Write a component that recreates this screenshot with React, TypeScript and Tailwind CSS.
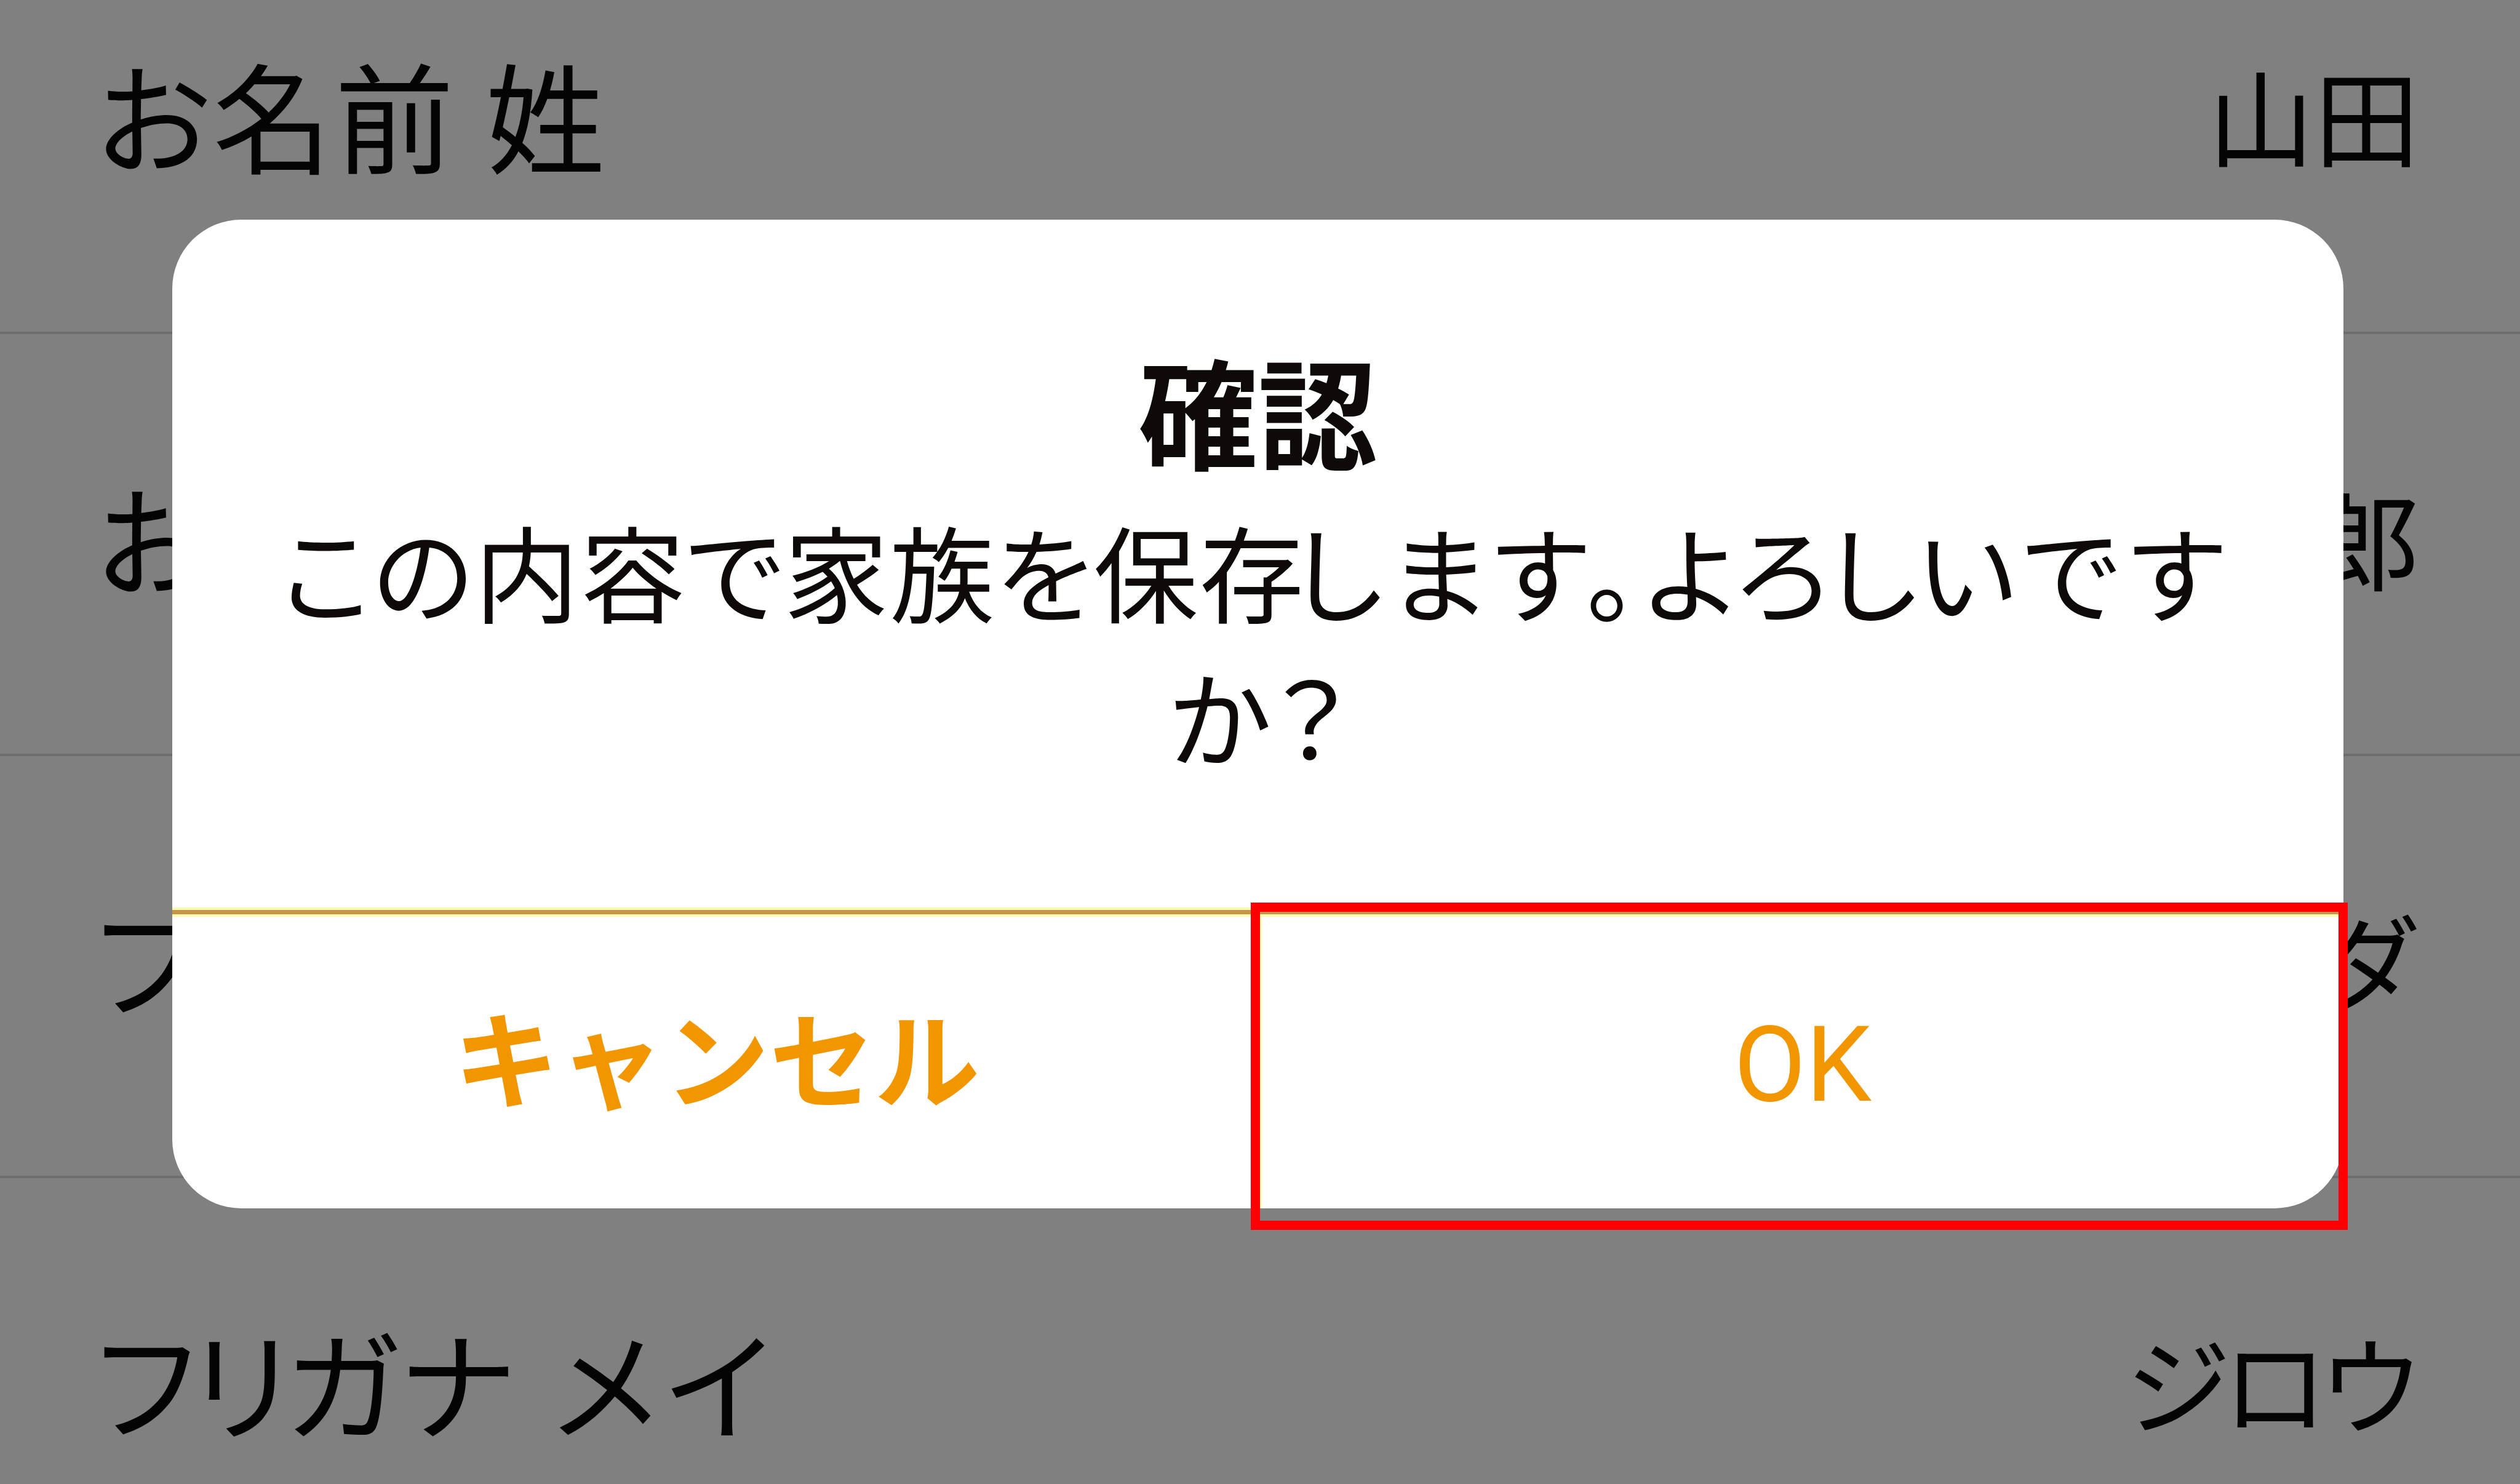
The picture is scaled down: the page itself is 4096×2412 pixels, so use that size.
const rows = [
  {
    label: <span className="tracking-[4px]">お名前 姓</span>,
    value: '山田',
    box: 'h-[543px] pt-[64px] border-b-[4px]',
    valueClass: '',
  },
  {
    label: 'お',
    value: '郎',
    box: 'h-[686px] pt-[208px] border-b-[4px]',
    valueClass: '',
  },
  {
    label: 'フ',
    value: 'ダ',
    box: 'h-[686px] pt-[208px] border-b-[4px]',
    valueClass: 'mr-[10px]',
  },
  {
    label: (
      <>
        <span className="tracking-[-7px]">フリ</span>
        <span className="tracking-[4px]">ガナ</span>
        <span className="tracking-[14px]"> メイ</span>
      </>
    ),
    value: 'ジロウ',
    box: 'h-[497px] pt-[208px]',
    valueClass: 'mr-[12px] tracking-[-8px]',
  },
];

export default function App() {
  return (
    <div
      lang="ja"
      className="relative h-[2412px] w-[4096px] overflow-hidden bg-[#808080] font-['Noto_Sans_CJK_JP',sans-serif] [font-feature-settings:'palt']"
    >
      {/* Dimmed form */}
      {rows.map(({ label, value, box, valueClass }) => (
        <div
          key={value}
          className={`flex justify-between border-[#6e6e6e] pr-[163px] pl-[156px] text-[#050404] ${box}`}
        >
          <div className="text-[194px] leading-[240px] whitespace-pre">{label}</div>
          <div className={`text-[172px] leading-[240px] ${valueClass}`}>{value}</div>
        </div>
      ))}

      {/* Dialog */}
      <div className="absolute top-[357px] left-[280px] flex h-[1607px] w-[3529px] flex-col overflow-hidden rounded-[112px] bg-white text-[#0e0a09]">
        <div className="flex h-[1118px] flex-col items-center pt-[188px] text-center">
          <h1 className="text-[194px] leading-[240px] font-bold">確認</h1>
          <p className="mt-[24px] text-[170px] leading-[235px] whitespace-nowrap">
            <span className="tracking-[2px]">この内容で家族を保</span>
            <span className="tracking-[-16px]">存</span>
            <span className="tracking-[12px]">します。</span>
            よろし
            <span className="tracking-[17px]">いです</span>
            <br />
            <span className="pl-[6px] tracking-[4px]">か？</span>
          </p>
        </div>
        <div className="h-[15px] border-y-[4px] border-[#fff9b0] bg-[#c4954a]" />
        <div className="grid flex-1 grid-cols-[1768px_1fr] text-[#f29600]">
          <button className="pb-[26px] pl-[2px] text-[171px] font-bold [font-feature-settings:normal]">
            キャンセル
          </button>
          <button className="border-l-[3px] border-[#fff9b0] pt-[8px] font-['Roboto',sans-serif] text-[170px]">
            OK
          </button>
        </div>
      </div>

      {/* Highlight frame */}
      <div className="absolute top-[1467px] left-[2033px] h-[532px] w-[1783px] border-[15px] border-[#ff0000]" />
    </div>
  );
}
